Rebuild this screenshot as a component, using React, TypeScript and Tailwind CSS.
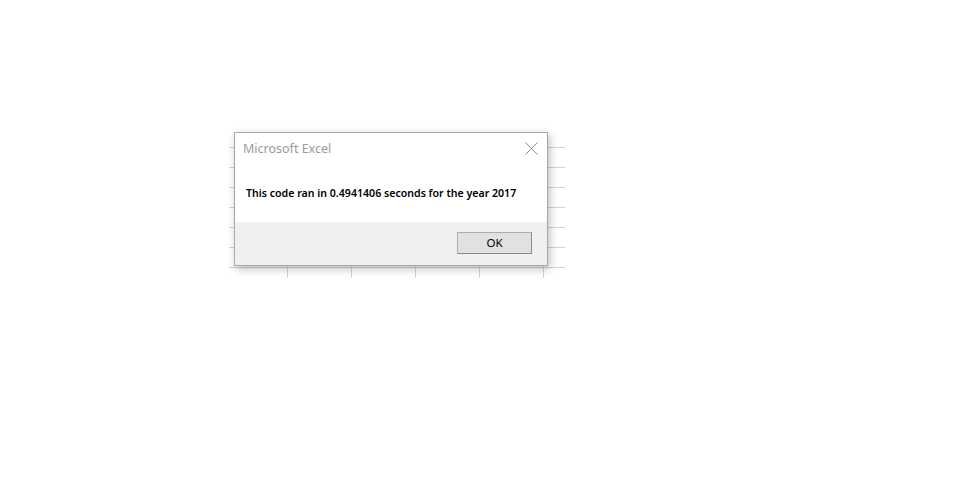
import React from 'react';

const COLS = [59, 64, 64, 64, 64, 21];
const ROWS = [16, 20, 20, 20, 20, 20, 20, 10];

const SheetBehind: React.FC = () => (
  <div className="flex flex-col">
    {ROWS.map((h, r) => (
      <div key={r} className="flex" style={{ height: h }}>
        {COLS.map((w, c) => (
          <div
            key={c}
            style={{ width: w }}
            className={`${r < ROWS.length - 1 ? 'border-b' : ''} ${c < COLS.length - 1 ? 'border-r' : ''} border-[#d4d4d4]`}
          />
        ))}
      </div>
    ))}
  </div>
);

const MessageBox: React.FC = () => (
  <div className="absolute left-[5px] top-0 w-[314px] h-[134px] bg-white border border-[#a8a8a8] shadow-[2px_3px_8px_rgba(0,0,0,0.25)] flex flex-col">
    <div className="flex items-start justify-between h-[52px] pl-[8px] pr-[9px] pt-[7px]">
      <span className="text-[12.5px] text-[#9a9a9a] font-['Noto_Sans','Open_Sans',sans-serif] leading-[18px]">Microsoft Excel</span>
      <svg width="13" height="13" viewBox="0 0 13 13" className="mt-[2px]">
        <path d="M0.5 0.5 L12.5 12.5 M12.5 0.5 L0.5 12.5" stroke="#8a8a8a" strokeWidth="1" fill="none" />
      </svg>
    </div>
    <div className="h-[37px] pl-[11px] text-[10.6px] font-semibold text-black font-['Noto_Sans','Open_Sans',sans-serif] leading-[16px]">
      This code ran in 0.4941406 seconds for the year 2017
    </div>
    <div className="flex-1 bg-[#f0f0f0] flex justify-end items-start pt-[10px] pr-[15px]">
      <button className="w-[75px] h-[22px] bg-[#e1e1e1] border border-[#adadad] border-r-[#8a8a8a] border-b-[#8a8a8a] text-[11.5px] text-black font-['Noto_Sans','Open_Sans',sans-serif] leading-none">
        OK
      </button>
    </div>
  </div>
);

export default function App() {
  return (
    <div className="w-[958px] h-[480px] bg-white overflow-hidden">
      <div className="relative ml-[229px] pt-[132px] w-[336px]">
        <div className="relative">
          <SheetBehind />
          <MessageBox />
        </div>
      </div>
    </div>
  );
}
